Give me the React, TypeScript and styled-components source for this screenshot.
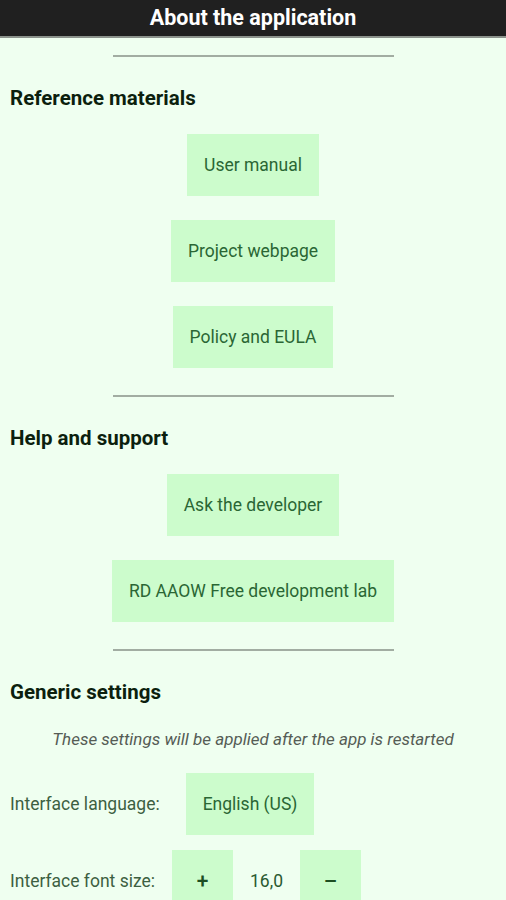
import React from 'react';
import styled, { createGlobalStyle } from 'styled-components';

const GlobalStyle = createGlobalStyle`
    html, body {
        margin: 0;
        padding: 0;
        background: #effff0;
        font-family: Roboto, 'Noto Sans', sans-serif;
    }
`;

const referenceLinks = ['User manual', 'Project webpage', 'Policy and EULA'];
const supportLinks = ['Ask the developer', 'RD AAOW Free development lab'];

const App: React.FC = () => {
    const fontSize = 16;

    return (
        <>
            <GlobalStyle />
            <Page>
                <Header>About the application</Header>
                <Content>
                    <Divider />
                    <SectionTitle>Reference materials</SectionTitle>
                    <ButtonColumn>
                        {referenceLinks.map(title => (
                            <LinkButton key={title}>{title}</LinkButton>
                        ))}
                    </ButtonColumn>

                    <Divider />
                    <SectionTitle>Help and support</SectionTitle>
                    <ButtonColumn>
                        {supportLinks.map(title => (
                            <LinkButton key={title}>{title}</LinkButton>
                        ))}
                    </ButtonColumn>

                    <Divider />
                    <SectionTitle>Generic settings</SectionTitle>
                    <Note>These settings will be applied after the app is restarted</Note>

                    <SettingRow gap={26}>
                        <SettingLabel>Interface language:</SettingLabel>
                        <LinkButton>English (US)</LinkButton>
                    </SettingRow>
                    <SettingRow gap={17}>
                        <SettingLabel>Interface font size:</SettingLabel>
                        <StepButton>+</StepButton>
                        <SizeValue>{fontSize.toFixed(1).replace('.', ',')}</SizeValue>
                        <StepButton>–</StepButton>
                    </SettingRow>
                </Content>
            </Page>
        </>
    );
};

const Page = styled.div`
    display: flex;
    flex-direction: column;
    min-height: 100vh;
    background: #effff0;
`;

const Header = styled.div`
    height: 36px;
    line-height: 35px;
    background: #202020;
    border-bottom: 2px solid #8c938c;
    color: #ffffff;
    font-size: 21.5px;
    font-weight: 700;
    text-align: center;
`;

const Content = styled.div`
    display: flex;
    flex-direction: column;
    padding: 17px 0 0;
`;

const Divider = styled.div`
    align-self: center;
    width: 281px;
    height: 2px;
    margin-bottom: 29px;
    background: #a2ada2;
`;

const SectionTitle = styled.div`
    padding-left: 10px;
    height: 24px;
    line-height: 24px;
    font-size: 20.5px;
    font-weight: 700;
    color: #0c1f0e;
`;

const ButtonColumn = styled.div`
    display: flex;
    flex-direction: column;
    align-items: center;
    gap: 24px;
    margin: 24px 0 27px;
`;

const LinkButton = styled.div`
    display: flex;
    align-items: center;
    justify-content: center;
    height: 62px;
    padding: 0 17px;
    background: #ccfccc;
    color: #2a6634;
    font-size: 17.5px;
`;

const Note = styled.div`
    margin: 25px 0 24px;
    line-height: 20px;
    text-align: center;
    font-size: 17px;
    font-style: italic;
    color: #555c55;
`;

const SettingRow = styled.div<{ gap: number }>`
    display: flex;
    align-items: center;
    gap: ${p => p.gap}px;
    padding-left: 10px;
    margin-bottom: 15px;
`;

const SettingLabel = styled.div`
    font-size: 17.5px;
    color: #3d5f42;
`;

const StepButton = styled.div`
    display: flex;
    align-items: center;
    justify-content: center;
    width: 61px;
    height: 62px;
    background: #ccfccc;
    color: #1d4d22;
    font-size: 21px;
    font-weight: 500;
`;

const SizeValue = styled.div`
    font-size: 17.5px;
    color: #2a5a30;
`;

export default App;
